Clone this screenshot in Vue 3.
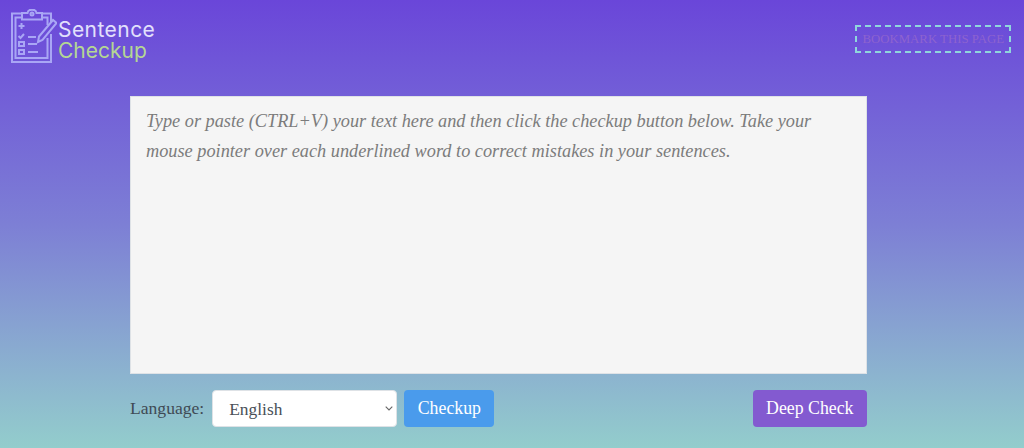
<template>
  <div class="page">
    <header class="topbar">
      <a class="logo" href="#">
        <svg class="logo-icon" width="46" height="54" viewBox="0 0 46 54" fill="none" stroke="#a9a6f5" stroke-width="2">
          <path d="M11 4.500H1v48.500h39V25" />
          <path d="M40 14V4.500h-9" />
          <path d="M11 10.500V4h5.500c.5-4.500 8.500-4.500 9 0H31v6.500z" />
          <circle cx="21" cy="5" r="1.500" />
          <path d="M11 8.500H4.500V49h32V29" />
          <path d="M36.500 16V8.500H31" />
          <path d="M27 33l1-5.500L42 11l3.500 3L31.500 31z" />
          <path d="M7.500 17h6M10.500 14v6" />
          <path d="M7.500 27l2 2 3.500-4M17 28h8" />
          <rect x="8" y="33" width="5" height="4" />
          <path d="M17 35h9" />
          <rect x="8" y="41" width="5" height="4" />
          <path d="M17 43h10" />
        </svg>
        <span class="logo-text">
          <span class="logo-top">Sentence</span>
          <span class="logo-bottom">Checkup</span>
        </span>
      </a>
      <a class="bookmark" href="#">BOOKMARK THIS PAGE</a>
    </header>

    <main class="checker">
      <textarea
        v-model="text"
        class="editor"
        placeholder="Type or paste (CTRL+V) your text here and then click the checkup button below. Take your mouse pointer over each underlined word to correct mistakes in your sentences."
      ></textarea>

      <div class="controls">
        <label class="lang-label" for="lang">Language:</label>
        <select id="lang" v-model="language" class="lang-select">
          <option v-for="lang in languages" :key="lang" :value="lang">{{ lang }}</option>
        </select>
        <button type="button" class="btn btn-blue">Checkup</button>
        <button type="button" class="btn btn-purple">Deep Check</button>
      </div>
    </main>
  </div>
</template>

<script setup>
import { ref } from 'vue'

const text = ref('')
const language = ref('English')
const languages = ['English', 'French', 'German', 'Spanish']
</script>

<style scoped>
.page {
  box-sizing: border-box;
  height: 448px;
  overflow: hidden;
  background: linear-gradient(to bottom, #6a46d9 0%, #7d7fd5 50%, #93cdcc 100%);
  font-family: "Liberation Serif", serif;
}

.topbar {
  display: flex;
  justify-content: space-between;
  align-items: flex-start;
  height: 96px;
  padding: 9px 13px 0 11px;
  box-sizing: border-box;
}

.logo {
  display: flex;
  align-items: flex-start;
  text-decoration: none;
}

.logo-icon {
  display: block;
}

.logo-text {
  display: flex;
  flex-direction: column;
  margin-left: 1px;
  padding-top: 10px;
  font-family: "Inter", sans-serif;
  font-size: 21px;
  line-height: 21px;
}

.logo-top {
  color: #e2e0fc;
  letter-spacing: 0.45px;
}

.logo-bottom {
  color: #b5d793;
}

.bookmark {
  display: block;
  margin-top: 16px;
  padding: 0 5px;
  border: 2px dashed #8fd6dc;
  font-size: 12.800px;
  line-height: 24px;
  color: #8d63cf;
  text-decoration: none;
  white-space: nowrap;
}

.checker {
  width: 737px;
  margin-left: 130px;
}

.editor {
  display: block;
  box-sizing: border-box;
  width: 100%;
  height: 278px;
  padding: 9px 15px;
  border: 1px solid #dee2e6;
  border-radius: 0;
  background: #f5f5f5;
  font-family: inherit;
  font-size: 18.300px;
  line-height: 30px;
  resize: none;
  outline: none;
}

.editor::placeholder {
  color: #7c7c7c;
  font-style: italic;
  opacity: 1;
}

.controls {
  display: flex;
  align-items: center;
  margin-top: 16px;
}

.lang-label {
  font-size: 17.600px;
  color: #3f4a55;
  margin-right: 8px;
}

.lang-select {
  box-sizing: border-box;
  width: 185px;
  height: 37px;
  padding: 0 16px;
  border: 1px solid #dee2e6;
  border-radius: 4px;
  appearance: none;
  background: #fff url("data:image/svg+xml,%3Csvg xmlns='http://www.w3.org/2000/svg' width='8' height='5'%3E%3Cpath d='M.7.7 4 4 7.300.7' fill='none' stroke='%23666' stroke-width='1.100'/%3E%3C/svg%3E") no-repeat right 3px center;
  color: #495057;
  font-family: inherit;
  font-size: 17.400px;
}

.btn {
  height: 37px;
  padding: 0 12.500px;
  border: 1px solid transparent;
  border-radius: 4px;
  color: #fff;
  font-family: inherit;
  font-size: 17.800px;
  cursor: pointer;
}

.btn-blue {
  margin-left: 7px;
  background: #4a9bec;
}

.btn-purple {
  margin-left: auto;
  background: #835ad0;
}
</style>

<style>
html,
body {
  margin: 0;
}
</style>
